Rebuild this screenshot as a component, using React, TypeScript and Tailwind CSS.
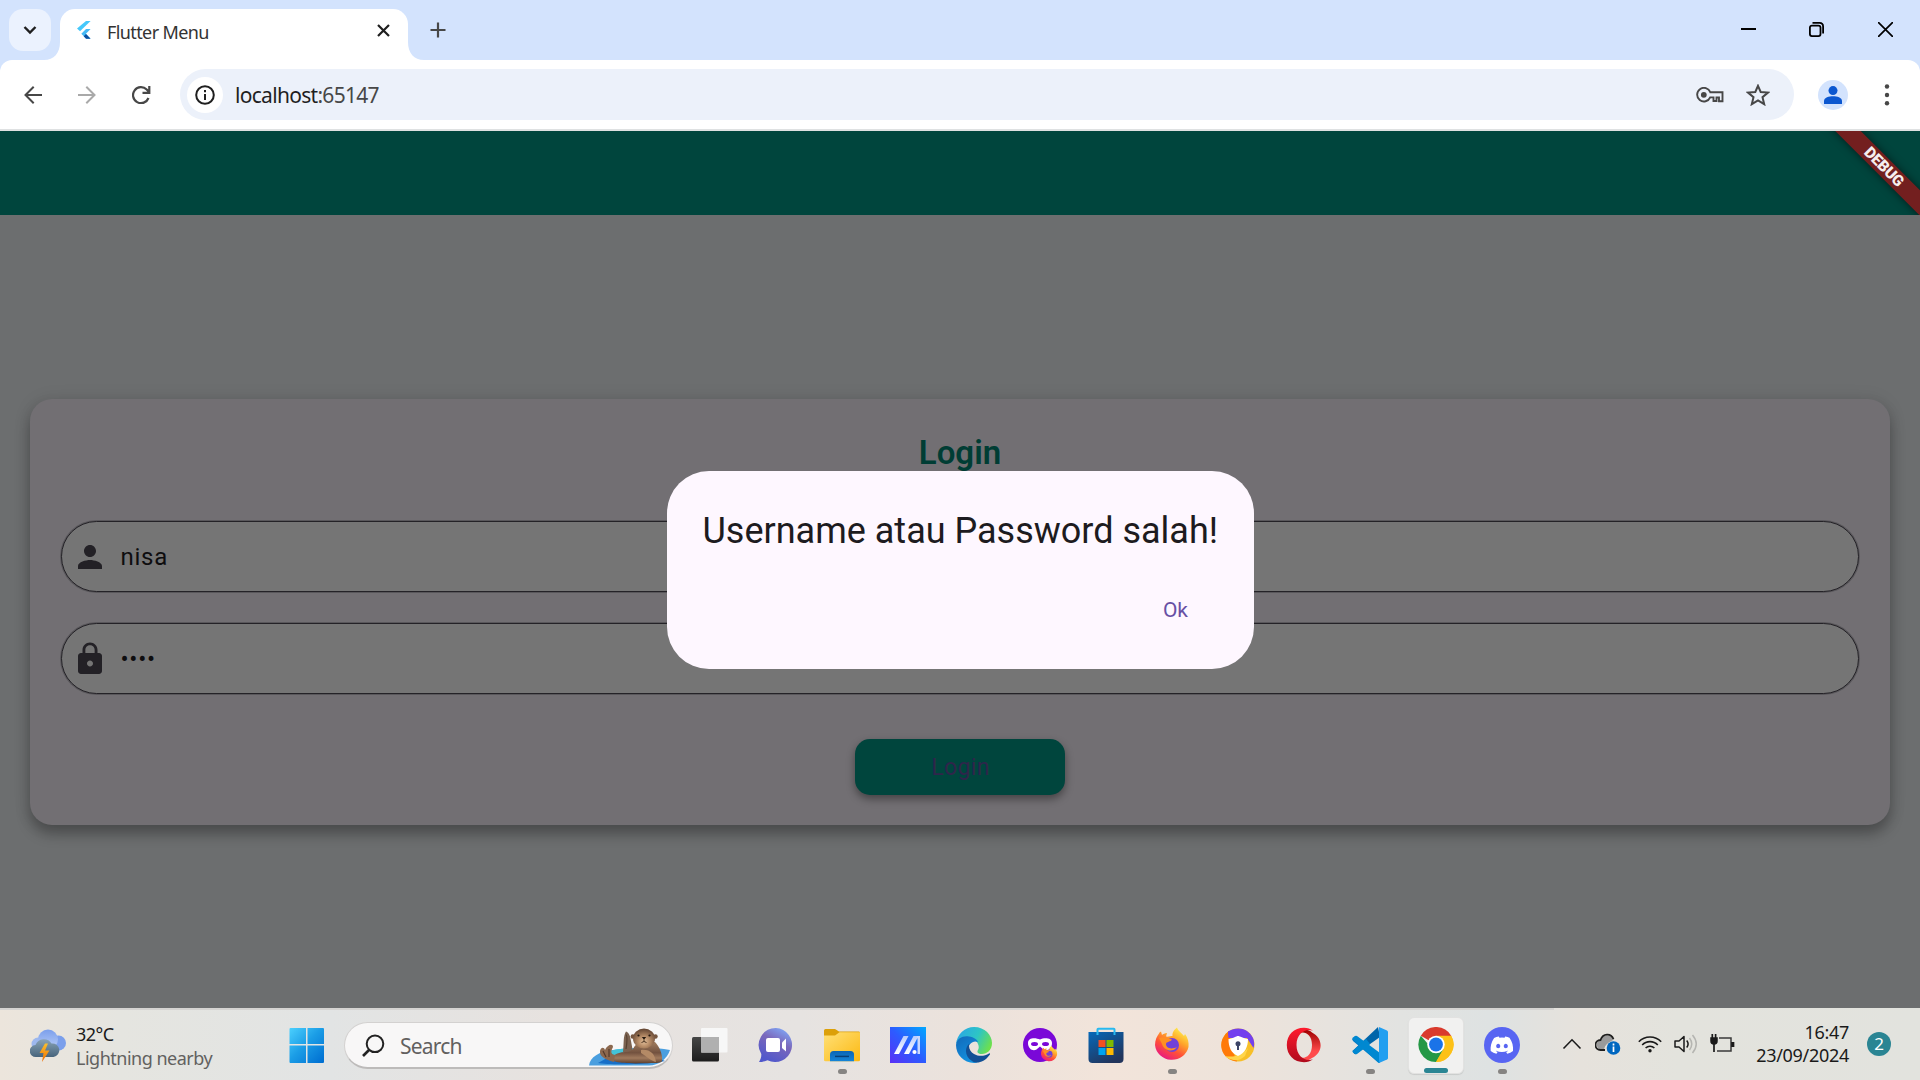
import React from "react";

const ui = "font-['Noto_Sans','Open_Sans',sans-serif]";

function FlutterLogo() {
  return (
    <svg className="h-[18px] w-[14px] shrink-0" viewBox="0 0 14 18">
      <path d="M9 0h4.600L3 10.300 0 7.500z" fill="#45c8fb" />
      <path d="M9 8h4.600L8.900 12.800 13.600 17.700H9.300L4.300 12.800z" fill="#45b9f5" />
      <path d="M9 17.700 6.700 15.200 9 13l4.600 4.700z" fill="#0a4fa0" />
    </svg>
  );
}

function TabStrip() {
  return (
    <div className="flex h-[60px] bg-[#d3e3fd] pl-[9px]">
      <div className="mt-[9px] flex h-[42px] w-[42px] items-center justify-center rounded-[14px] bg-[#ebf2fe]">
        <svg className="h-[10px] w-[14px]" viewBox="0 0 14 10" fill="none" stroke="#1f1f1f" strokeWidth="2.400">
          <path d="M1.500 2 7 7.500 12.500 2" />
        </svg>
      </div>
      <svg className="mt-[42px] ml-[-9px] h-[18px] w-[18px]" viewBox="0 0 18 18">
        <path d="M18 0v18H2C12 18 18 11 18 0z" fill="#fff" />
      </svg>
      <div className="mt-[9px] flex h-[51px] w-[348px] items-start rounded-t-[15px] bg-white pl-[17px]">
        <div className="mt-[12px] flex">
          <FlutterLogo />
        </div>
        <span className="mt-[11px] ml-[16px] w-[258px] text-[18px] leading-[24px] tracking-[-0.6px] whitespace-nowrap text-[#333]">Flutter Menu</span>
        <svg className="mt-[15px] ml-[12px] h-[13px] w-[13px]" viewBox="0 0 13 13" stroke="#1f1f1f" strokeWidth="2.200">
          <path d="M1 1 12 12M12 1 1 12" />
        </svg>
      </div>
      <svg className="mt-[42px] h-[18px] w-[18px]" viewBox="0 0 18 18">
        <path d="M0 0v18h16C6 18 0 11 0 0z" fill="#fff" />
      </svg>
      <svg className="mt-[22px] ml-[4px] h-[16px] w-[16px]" viewBox="0 0 16 16" stroke="#474747" strokeWidth="2.200">
        <path d="M8 0.500V15.500M0.500 8H15.500" />
      </svg>
      <div className="ml-auto flex">
        <svg className="mt-[22px] mr-[53px] h-[15px] w-[15px]" viewBox="0 0 15 15">
          <path d="M0 6h15v2H0z" />
        </svg>
        <svg className="mt-[22px] mr-[54px] h-[15px] w-[15px]" viewBox="0 0 15 15" fill="none" stroke="#000" strokeWidth="1.800">
          <rect x="0.900" y="3.600" width="10.600" height="10.500" rx="2" />
          <path d="M3.500 0.900H10.500Q14.100 0.900 14.100 4.500V11.500" />
        </svg>
        <svg className="mt-[22px] mr-[27px] h-[15px] w-[15px]" viewBox="0 0 15 15" stroke="#000" strokeWidth="1.700">
          <path d="M0 0 15 15M15 0 0 15" />
        </svg>
      </div>
    </div>
  );
}

function Toolbar() {
  return (
    <div className="bg-[#d3e3fd]">
      <div className="flex h-[71px] items-center rounded-t-[12px] border-b-2 border-[#dfe1e2] bg-white pl-[24px]">
        <svg className="h-[18px] w-[18px]" viewBox="0 0 18 18" fill="none" stroke="#474747" strokeWidth="2">
          <path d="M18 9H1.800M9.700 .8 1.500 9 9.700 17.200" />
        </svg>
        <svg className="ml-[36px] h-[18px] w-[18px]" viewBox="0 0 18 18" fill="none" stroke="#a9a9a9" strokeWidth="2">
          <path d="M0 9H16.200M8.300 .8 16.500 9 8.300 17.200" />
        </svg>
        <svg className="ml-[36px] h-[18px] w-[19px]" viewBox="0 0 19 18" fill="none" stroke="#474747" strokeWidth="2.200">
          <path d="M16.500 12A8 8 0 1 1 14.700 3.500L17 6M17.300 0V6.800H10.500" />
        </svg>
        <div className="ml-[29px] flex h-[51px] w-[1614px] items-center rounded-full bg-[#ecf1fa] pl-[7px]">
          <div className="flex h-[36px] w-[36px] items-center justify-center rounded-full bg-white">
            <svg className="h-[20px] w-[20px]" viewBox="0 0 20 20" fill="none" stroke="#1f1f1f" strokeWidth="2">
              <circle cx="10" cy="10" r="8.800" />
              <path d="M10 9V15M10 5V7.200" />
            </svg>
          </div>
          <span className="ml-[12px] text-[21px] leading-[28px] tracking-[-0.7px] text-[#1f1f1f]">
            localhost<span className="text-[#474747]">:65147</span>
          </span>
          <svg className="ml-auto h-[16px] w-[28px]" viewBox="0 0 28 16" fill="none" stroke="#474747" strokeWidth="1.900">
            <path d="M14.300 5.200H26.500V14.300H23V10.500H20.500V14H17.500V10.400H14.200A6.800 6.800 0 1 1 14.300 5.200Z" />
            <circle cx="7.800" cy="7.800" r="2.900" fill="#474747" stroke="none" />
          </svg>
          <svg className="mr-[24px] ml-[22px] h-[22px] w-[24px]" viewBox="0 0 24 22" fill="none" stroke="#474747" strokeWidth="2">
            <path d="M12 1.800 14.700 8 22 8.600 16.500 13.200 18.200 20.200 12 16.500 5.800 20.200 7.500 13.200 2 8.600 9.300 8Z" />
          </svg>
        </div>
        <div className="ml-[24px] flex h-[30px] w-[30px] items-center justify-center rounded-full bg-[#d3e3fd]">
          <svg className="h-[18px] w-[18px]" viewBox="0 0 18 18" fill="#0b57d0">
            <circle cx="9" cy="4.600" r="4.500" />
            <path d="M0 18v-3.200C0 11.700 5 10.300 9 10.300s9 1.400 9 4.500V18z" />
          </svg>
        </div>
        <svg className="ml-[36px] h-[22px] w-[6px]" viewBox="0 0 6 22" fill="#474747">
          <circle cx="3" cy="2.500" r="2.200" />
          <circle cx="3" cy="11" r="2.200" />
          <circle cx="3" cy="19.300" r="2.200" />
        </svg>
      </div>
    </div>
  );
}

function Field({ icon, children }: { icon: React.ReactNode; children: React.ReactNode }) {
  return (
    <div className="flex h-[71px] items-center rounded-full border border-[#242227] bg-[#757575] pl-[10px] shadow-[0_0_0_1px_#59575b]">
      {icon}
      {children}
    </div>
  );
}

function FlutterPage() {
  return (
    <div className="relative flex h-[877px] flex-col overflow-hidden bg-[#6c6e6f] font-[Roboto,sans-serif]">
      <div className="h-[84px] shrink-0 bg-[#00453d]" />
      <div className="flex flex-1 flex-col justify-center px-[30px]">
        <div className="flex h-[426px] flex-col rounded-[22px] bg-[#726f73] px-[31px] pt-[32px] shadow-[0_9px_14px_rgba(0,0,0,0.28),0_1px_18px_rgba(0,0,0,0.1)]">
          <div className="text-center text-[33px] leading-[44px] font-semibold text-[#003d34]">Login</div>
          <div className="mt-[46.5px]">
            <Field
              icon={
                <svg className="h-[36px] w-[36px]" viewBox="0 0 24 24" fill="#232126">
                  <path d="M12 12c2.210 0 4-1.790 4-4s-1.790-4-4-4-4 1.790-4 4 1.790 4 4 4zm0 2c-2.670 0-8 1.340-8 4v2h16v-2c0-2.660-5.330-4-8-4z" />
                </svg>
              }
            >
              <span className="ml-[12.5px] text-[24px] leading-[36px] tracking-[0.75px] text-[#0e0d0f]">nisa</span>
            </Field>
          </div>
          <div className="mt-[31px]">
            <Field
              icon={
                <svg className="h-[36px] w-[36px]" viewBox="0 0 24 24" fill="#232126">
                  <path d="M18 8h-1V6c0-2.760-2.240-5-5-5S7 3.240 7 6v2H6c-1.100 0-2 .9-2 2v10c0 1.100.9 2 2 2h12c1.100 0 2-.9 2-2V10c0-1.100-.9-2-2-2zm-6 9c-1.100 0-2-.9-2-2s.9-2 2-2 2 .9 2 2-.9 2-2 2zm3.100-9H8.900V6c0-1.710 1.390-3.100 3.100-3.100 1.710 0 3.100 1.390 3.100 3.100v2z" />
                </svg>
              }
            >
              <span className="ml-[12.5px] text-[24px] leading-[36px] tracking-[0.75px] text-[#0e0d0f]">••••</span>
            </Field>
          </div>
          <div className="mt-[45px] flex h-[56px] w-[210px] items-center justify-center self-center rounded-[15px] bg-[#00453d] pt-[3px] pl-[1px] text-[23px] tracking-[0.4px] text-[#2f254b] shadow-[0_4px_8px_rgba(0,0,0,0.4)]">
            Login
          </div>
        </div>
      </div>

      <div className="absolute top-[340px] left-[666.5px] flex h-[198px] w-[587px] flex-col rounded-[42px] bg-[#fef7ff] px-[36px] pt-[36px]">
        <div className="text-[36px] leading-[48px] whitespace-nowrap text-[#1d1b20]">Username atau Password salah!</div>
        <div className="mt-[40px] mr-[29.5px] self-end text-[21px] leading-[30px] text-[#6750a4]">Ok</div>
      </div>

      <div className="absolute top-0 right-0 h-[84px] w-[120px] overflow-hidden">
        <div className="absolute top-[27px] left-[-16px] flex h-[18px] w-[200px] rotate-45 items-center justify-center bg-[#731f1f] text-[15.500px] leading-[18px] font-black tracking-[-0.2px] text-[#f6eeee] shadow-[0_0_9px_rgba(0,0,0,0.55)]">
          DEBUG
        </div>
      </div>
    </div>
  );
}

function WeatherIcon() {
  return (
    <svg className="h-[34px] w-[36px]" viewBox="0 0 36 34">
      <defs>
        <linearGradient id="wc" x1="0" y1="0" x2="0" y2="1">
          <stop offset="0" stopColor="#7b9fec" />
          <stop offset="1" stopColor="#b9cdf6" />
        </linearGradient>
        <linearGradient id="wd" x1="0" y1="0" x2="0" y2="1">
          <stop offset="0" stopColor="#88a2b5" />
          <stop offset="1" stopColor="#48657c" />
        </linearGradient>
        <linearGradient id="wb" x1="0" y1="0" x2="0" y2="1">
          <stop offset="0" stopColor="#fbc02d" />
          <stop offset="1" stopColor="#ef6c00" />
        </linearGradient>
      </defs>
      <circle cx="8" cy="15" r="6.500" fill="#9db8ee" />
      <circle cx="28.500" cy="14" r="7.500" fill="#7b9feb" />
      <circle cx="18" cy="10.500" r="10" fill="url(#wc)" />
      <path d="M6 28a6 6 0 0 1-.5-12A9 9 0 0 1 21.500 14.500 6.800 6.800 0 1 1 23.500 28z" fill="url(#wd)" />
      <path d="M15 14.500 9.500 24H13.500L12 33 19.500 21.500H15L18 14.500z" fill="url(#wb)" />
    </svg>
  );
}

function StartIcon() {
  return (
    <svg className="h-[36px] w-[36px]" viewBox="0 0 36 36">
      <defs>
        <linearGradient id="st" gradientUnits="userSpaceOnUse" x1="0" y1="0" x2="34" y2="34">
          <stop offset="0" stopColor="#4dd2ff" />
          <stop offset="0.500" stopColor="#1b9de6" />
          <stop offset="1" stopColor="#0070d2" />
        </linearGradient>
      </defs>
      <path d="M1.500 1H17V17H.5V2a1 1 0 0 1 1-1zM18.500 1H34a1 1 0 0 1 1 1V17H18.500zM.5 18.500H17V36H1.500a1 1 0 0 1-1-1zM18.500 18.500H35V35a1 1 0 0 1-1 1H18.500z" fill="url(#st)" />
    </svg>
  );
}

function Otter() {
  return (
    <svg className="h-[38px] w-[82px]" viewBox="0 0 82 38">
      <defs>
        <linearGradient id="ob" x1="0" y1="0" x2="0" y2="1">
          <stop offset="0" stopColor="#a07c5e" />
          <stop offset="0.500" stopColor="#73523f" />
          <stop offset="0.750" stopColor="#a07a5d" />
          <stop offset="1" stopColor="#5d402f" />
        </linearGradient>
        <radialGradient id="of" cx="0.500" cy="0.650" r="0.600">
          <stop offset="0" stopColor="#e2bf9a" />
          <stop offset="0.450" stopColor="#b68b66" />
          <stop offset="1" stopColor="#6a4b37" />
        </radialGradient>
      </defs>
      <path d="M0 37.500C1 29 10 23.500 24 22 43 19 66 19 81 22 78 31 70 37.500 60 37.500z" fill="#4b9fdf" />
      <path d="M22 23c4-2.200 16-2.500 24-2v7H20z" fill="#43c3d8" />
      <path d="M9 35C18 37 60 37 76 33L68 30H18z" fill="#176fc8" />
      <path d="M34 24C35 16 34 8 37 3.500 40 4 41.500 9 42 13L44 24z" fill="#7b6250" />
      <path d="M37 6.500C39 9 38 15 37 21" fill="none" stroke="#57402f" strokeWidth="1.200" />
      <path d="M44 21C47 15 50 14 56 14H66C70 18 74 26 73 33 72 35 68 35 62 35 50 35.500 32 36 25 33 22 28 27 24.500 36 24 40 24 42 23 44 21z" fill="url(#ob)" />
      <path d="M11 23C12 19 15 19 16 22 18 17 24 15 24 19 22 23 21 26 26 27L25 34C18 32 10 29 11 23z" fill="#8c684e" />
      <path d="M14 23 17 29M20 21 20 29" stroke="#543a2b" strokeWidth="1.200" />
      <circle cx="43.800" cy="8.500" r="2.200" fill="#755640" />
      <circle cx="66.500" cy="8.500" r="2.200" fill="#755640" />
      <ellipse cx="55" cy="10.500" rx="11" ry="10" fill="url(#of)" />
      <path d="M52 22C61 21 66 26 67 34 62 33 57 28 52 25z" fill="#b48a66" />
      <circle cx="49.500" cy="7.500" r="1.100" fill="#24180f" />
      <circle cx="60.500" cy="7.500" r="1.100" fill="#24180f" />
      <path d="M52.800 9H57.200L55 11.800z" fill="#24180f" />
      <path d="M55 11.500V13.500M52.500 14.500Q55 12.500 57.500 14.500" stroke="#47301f" fill="none" />
    </svg>
  );
}

const ic = "h-[36px] w-[36px]";

function TaskViewIcon() {
  return (
    <svg className={ic} viewBox="0 0 36 36">
      <defs>
        <linearGradient id="tv" x1="0" y1="0" x2="0" y2="1">
          <stop offset="0" stopColor="#464646" />
          <stop offset="1" stopColor="#1d1d1d" />
        </linearGradient>
      </defs>
      <rect x="0" y="10" width="27" height="24.500" rx="1.500" fill="url(#tv)" />
      <rect x="9" y="1" width="26.500" height="24.500" rx="1" fill="#f7f7f7" />
      <path d="M9 10H27V25.500H9z" fill="#b0b0b0" />
    </svg>
  );
}

function ChatIcon() {
  return (
    <svg className={ic} viewBox="0 0 36 36">
      <defs>
        <linearGradient id="ct" x1="0.850" y1="0.100" x2="0.400" y2="1">
          <stop offset="0" stopColor="#7fa0f0" />
          <stop offset="0.400" stopColor="#7b68bb" />
          <stop offset="1" stopColor="#5158cb" />
        </linearGradient>
      </defs>
      <path d="M18 1A17 17 0 1 1 9.500 33.200C7 34.500 4 35 1 35 2.500 32.500 3.500 30 3.300 27A17 17 0 0 1 18 1z" fill="url(#ct)" />
      <rect x="8" y="11" width="14" height="14" rx="2" fill="#fff" />
      <path d="M24 15.500 28 11.500V24.500L24 21z" fill="#fff" />
    </svg>
  );
}

function FolderIcon() {
  return (
    <svg className={ic} viewBox="0 0 36 36">
      <defs>
        <linearGradient id="fo" x1="0" y1="0" x2="1" y2="1">
          <stop offset="0" stopColor="#ffe077" />
          <stop offset="1" stopColor="#fcb912" />
        </linearGradient>
        <linearGradient id="fb" x1="0" y1="0" x2="0" y2="1">
          <stop offset="0" stopColor="#0b65b5" />
          <stop offset="1" stopColor="#1585d8" />
        </linearGradient>
      </defs>
      <path d="M0 3.500Q0 2 1.500 2H11L15 4.500H35Q36 4.500 36 6V14H0z" fill="#dca009" />
      <path d="M0 8.500H11L15.500 5.200H36V33Q36 34.300 34.500 34.300H1.500Q0 34.300 0 33z" fill="url(#fo)" />
      <path d="M6 34.300V27.500Q6 24 9.500 24H26.500Q30 24 30 27.500V34.300z" fill="url(#fb)" />
      <path d="M11 29.400H25" stroke="#083f77" strokeWidth="1.500" />
    </svg>
  );
}

function AsusIcon() {
  return (
    <svg className={ic} viewBox="0 0 36 36">
      <defs>
        <linearGradient id="as" x1="0" y1="1" x2="1" y2="0">
          <stop offset="0" stopColor="#5a30f5" />
          <stop offset="0.500" stopColor="#2c5cff" />
          <stop offset="1" stopColor="#00a8ff" />
        </linearGradient>
        <linearGradient id="aw" x1="0" y1="1" x2="0" y2="0">
          <stop offset="0" stopColor="#fff" />
          <stop offset="1" stopColor="#b9ccff" />
        </linearGradient>
      </defs>
      <path d="M0 0H36V36H0z" fill="url(#as)" />
      <path d="M4 27 13.500 9H18.500L9 27z" fill="url(#aw)" />
      <path d="M14 27 23.500 9H28.500L19 27z" fill="url(#aw)" />
      <path d="M26.500 9H30V27H27.500V12z" fill="#c9d8ff" />
      <circle cx="24.500" cy="25" r="2.100" fill="#fff" />
    </svg>
  );
}

function EdgeIcon() {
  return (
    <svg className={ic} viewBox="0 0 36 36">
      <defs>
        <linearGradient id="eg" x1="0" y1="0.200" x2="1" y2="0.600">
          <stop offset="0" stopColor="#2aa6e6" />
          <stop offset="0.550" stopColor="#2dc5c5" />
          <stop offset="1" stopColor="#6ee04c" />
        </linearGradient>
        <linearGradient id="eb" x1="0" y1="0" x2="0.600" y2="1">
          <stop offset="0" stopColor="#1269b9" />
          <stop offset="1" stopColor="#1292e0" />
        </linearGradient>
      </defs>
      <path d="M0 17C1 7 9 0 18 0 29 0 36 8 36 16 36 23 31 27 26 27 22 27 20.500 25 22 23 24 20 22 14 17 12 11 9 4 11 0 17z" fill="url(#eg)" />
      <path d="M0 18C1 11 7 8.500 13 9.500 18 10 21.500 13 22 15 17 13 12 17 12 23 12 29 16 34 22 35.500 10 38 0 29 0 18z" fill="url(#eb)" />
      <path d="M13.500 16.500C12 20 14 25 18 27 23 30 29 29 33 26.500 34 26 34.500 27 33.500 28 28 36 20 37 16 34 9 30 8 21 13.500 16.500z" fill="#114f95" />
    </svg>
  );
}

function FirefoxShape({ id }: { id: string }) {
  return (
    <>
      <defs>
        <linearGradient id={id} x1="0.850" y1="0.050" x2="0.250" y2="1">
          <stop offset="0" stopColor="#fff44f" />
          <stop offset="0.350" stopColor="#ffa52a" />
          <stop offset="0.650" stopColor="#ff5038" />
          <stop offset="1" stopColor="#e6138a" />
        </linearGradient>
      </defs>
      <path d="M1 18C1 13 3 9 5 6.500 5.500 5.500 6 5 7 4.500L8 8C9 7 11 6 13 6L12 9.500C14 10 17 9 18.500 9 18 5 21 2 23 0.500 24 4 28 6 30 9L31 7C34 11 35 15 34.500 20A17 16.500 0 0 1 1 18z" fill={`url(#${id})`} />
      <circle cx="18" cy="18" r="7" fill="#7041d8" />
      <path d="M5 11C9 9 13 11 18 12.500 17 15 12 14.500 12 17 12 21 17 23 23 20 19 26 10 24 8 17z" fill="#ff8f22" />
    </>
  );
}

function PrivateIcon() {
  return (
    <svg className={ic} viewBox="0 0 36 36">
      <circle cx="18" cy="18" r="17" fill="#7a08d8" />
      <path d="M6 16C6 10 14 10.500 18 12.500 22 10.500 30 10.500 30 16 30 22 25 24.500 21.500 22.500L18 19.500 14.500 22.500C11 24.500 6 22 6 16z" fill="#fff" />
      <ellipse cx="12.500" cy="17" rx="3.500" ry="2.100" fill="#7a08d8" />
      <ellipse cx="23.500" cy="17" rx="3.500" ry="2.100" fill="#7a08d8" />
      <g transform="translate(18.500 18.500) scale(.48)">
        <FirefoxShape id="fxs" />
      </g>
    </svg>
  );
}

function StoreIcon() {
  return (
    <svg className={ic} viewBox="0 0 36 36">
      <defs>
        <linearGradient id="ms" x1="0" y1="0" x2="0.600" y2="1">
          <stop offset="0" stopColor="#0669ba" />
          <stop offset="1" stopColor="#22355c" />
        </linearGradient>
      </defs>
      <path d="M.5 5H35.500V32Q35.500 36 31.500 36H4.500Q.5 36 .5 32z" fill="url(#ms)" />
      <path d="M9.500 8V2.500Q9.500 1.800 10.200 1.800H25.800Q26.500 1.800 26.500 2.500V8" fill="none" stroke="#28b9f0" strokeWidth="2" />
      <path d="M10.500 13h7v7h-7z" fill="#f25022" />
      <path d="M18.500 13h7v7h-7z" fill="#7fba00" />
      <path d="M10.500 21h7v7h-7z" fill="#00a4ef" />
      <path d="M18.500 21h7v7h-7z" fill="#ffb900" />
    </svg>
  );
}

function FirefoxIcon() {
  return (
    <svg className={ic} viewBox="0 0 36 36">
      <FirefoxShape id="fxl" />
    </svg>
  );
}

function SecureIcon() {
  return (
    <svg className={ic} viewBox="0 0 36 36">
      <circle cx="18" cy="18" r="16.500" fill="#f7bf28" />
      <path d="M17 34.500A16.500 16.500 0 0 1 9 4L11 20z" fill="#ff7a08" />
      <path d="M8 4.500C17-1 28 1 33 11 34.500 15 34.500 18 33.500 21L27 11 8.500 11C8 8 8 6 8 4.500z" fill="#7340ee" />
      <path d="M5 29C14 31 22 28 28 21L25 29C19 35 10 34 5 29z" fill="#ffd54a" />
      <path d="M8.500 12C14 11.500 16 9 18 9S23 11.500 28 12C28 20 25 26 18 29 11 26 8.500 20 8.500 12z" fill="#fff" />
      <circle cx="18" cy="16.800" r="2.500" fill="#3d4566" />
      <path d="M17 17H19V23H17z" fill="#3d4566" />
    </svg>
  );
}

function OperaIcon() {
  return (
    <svg className={ic} viewBox="0 0 36 36">
      <defs>
        <linearGradient id="op" x1="0" y1="0" x2="0" y2="1">
          <stop offset="0" stopColor="#ff1b2d" />
          <stop offset="1" stopColor="#b00b1d" />
        </linearGradient>
        <linearGradient id="oq" x1="0" y1="0" x2="0" y2="1">
          <stop offset="0" stopColor="#9c0000" />
          <stop offset="0.700" stopColor="#ff4b4b" />
        </linearGradient>
      </defs>
      <path d="M12 7C16 1.500 22 1.500 26 5.500 37 11 38 25 26 31 21 35 16 34 12 29.500 17 33 26 30 26 18S17 3.500 12 7z" fill="url(#oq)" />
      <path d="M18 .8C8 .8 .8 8 .8 18S8 35.200 18 35.200C21.500 35.200 24.500 34 27 32.200 20 35 10.500 30 10.500 18S20 1 27 3.800C24.500 2 21.500 .8 18 .8z" fill="url(#op)" />
    </svg>
  );
}

function CodeIcon() {
  return (
    <svg className={ic} viewBox="0 0 36 36">
      <path d="M0 12 3.500 9 27 26.500V36L1 14z" fill="#0079c4" />
      <path d="M.5 24 26 0 28 10 4 27Q3 27.500 2 26.500z" fill="#0065a9" />
      <path d="M1 12.500Q0 11.500 1 10.500L3 9Q4 8.500 5 9L28 26V36L26 35.500z" fill="#0088d1" />
      <path d="M27 0 35 3.500Q36 4 36 5V31Q36 32 35 32.500L27 36z" fill="#229ff0" />
      <path d="M1 23.500 14 11.700 18 17 5 27Q4 27.500 3 27L1 25.500Q0 24.500 1 23.500z" fill="#0088d1" />
    </svg>
  );
}

function ChromeIcon() {
  return (
    <svg className={ic} viewBox="0 0 36 36">
      <path d="M18 18 2.400 9A18 18 0 0 1 33.600 9z" fill="#d93a2d" />
      <path d="M18 18 33.600 9A18 18 0 0 1 18 36L18 26z" fill="#fdc117" />
      <path d="M18 18H10.200L2.400 9A18 18 0 0 0 18 36L25.800 22.500z" fill="#249846" />
      <path d="M18 9H33.600A18 18 0 0 1 18 36L25.800 22.500z" fill="#fdc117" />
      <circle cx="18" cy="18" r="9" fill="#fff" />
      <circle cx="18" cy="18" r="7.100" fill="#1a73e8" />
    </svg>
  );
}

function DiscordIcon() {
  return (
    <svg className={ic} viewBox="0 0 36 36">
      <circle cx="18" cy="18" r="18" fill="#5865f2" />
      <g transform="translate(6.600 6.800) scale(.95)">
        <path fill="#fff" d="M20.317 4.370a19.800 19.800 0 0 0-4.885-1.515.074.074 0 0 0-.079.037c-.21.375-.444.864-.608 1.250a18.270 18.270 0 0 0-5.487 0 12.640 12.640 0 0 0-.617-1.250.077.077 0 0 0-.079-.037A19.740 19.740 0 0 0 3.677 4.370C.533 9.046-.32 13.580.099 18.058a19.900 19.900 0 0 0 5.993 3.030 14 14 0 0 0 1.226-1.994 13.100 13.100 0 0 1-1.872-.892l.372-.292c3.928 1.793 8.180 1.793 12.062 0l.373.292a12.300 12.300 0 0 1-1.873.892 16 16 0 0 0 1.225 1.993 19.800 19.800 0 0 0 6.002-3.030c.5-5.177-.838-9.674-3.549-13.687zM8.020 15.330c-1.183 0-2.157-1.085-2.157-2.419s.956-2.419 2.157-2.419c1.210 0 2.176 1.096 2.157 2.420 0 1.333-.956 2.418-2.157 2.418zm7.975 0c-1.183 0-2.157-1.085-2.157-2.419s.955-2.419 2.157-2.419c1.210 0 2.176 1.096 2.157 2.420 0 1.333-.946 2.418-2.157 2.418z" />
      </g>
    </svg>
  );
}

const apps: { icon: React.ReactNode; state?: "running" | "active" }[] = [
  { icon: <TaskViewIcon /> },
  { icon: <ChatIcon /> },
  { icon: <FolderIcon />, state: "running" },
  { icon: <AsusIcon /> },
  { icon: <EdgeIcon /> },
  { icon: <PrivateIcon /> },
  { icon: <StoreIcon /> },
  { icon: <FirefoxIcon />, state: "running" },
  { icon: <SecureIcon /> },
  { icon: <OperaIcon /> },
  { icon: <CodeIcon />, state: "running" },
  { icon: <ChromeIcon />, state: "active" },
  { icon: <DiscordIcon />, state: "running" },
];

function TaskApp({ icon, state }: { icon: React.ReactNode; state?: "running" | "active" }) {
  return (
    <div className="flex w-[66px] justify-center pt-[9px]">
      <div className={state === "active" ? "flex h-[57px] w-[56px] flex-col items-center rounded-[6px] border border-[#e2e2e1] bg-[#f1f1f0] pt-[9px] shadow-[0_1px_1px_rgba(0,0,0,0.1)]" : "flex h-[57px] w-[56px] flex-col items-center pt-[10px]"}>
        {icon}
        {state === "active" && <div className="mt-[6px] h-[5px] w-[24px] shrink-0 rounded-full bg-[#2a8593]" />}
        {state === "running" && <div className="mt-[6px] h-[5px] w-[9px] shrink-0 rounded-full bg-[#868482]" />}
      </div>
    </div>
  );
}

function Tray() {
  return (
    <div className="flex items-center pb-[1px]">
      <svg className="h-[12px] w-[20px]" viewBox="0 0 20 12" fill="none" stroke="#1a1a1a" strokeWidth="1.600">
        <path d="M1.500 10.500 10 1.800 18.500 10.500" />
      </svg>
      <svg className="ml-[13px] h-[22px] w-[26px]" viewBox="0 0 26 22">
        <path d="M6 17A5.300 5.300 0 0 1 5 7 8 8 0 0 1 19 6.500L13 10Q9 13 9 18z" fill="#9a9a9a" />
        <path d="M10 17H5.500A5 5 0 0 1 5.500 7C8 0 16 0 18.500 6" fill="none" stroke="#1d1d1d" strokeWidth="1.800" />
        <circle cx="18.500" cy="15" r="6.800" fill="#0067c0" />
        <path d="M18.500 13.500V19M18.500 10.500V12.500" stroke="#fff" strokeWidth="1.700" />
      </svg>
      <svg className="ml-[17px] h-[18px] w-[24px]" viewBox="0 0 24 18" fill="none" stroke="#1a1a1a" strokeWidth="1.600">
        <path d="M.8 6.800A15.600 15.600 0 0 1 23.200 6.800M4.200 10A10.800 10.800 0 0 1 19.800 10M7.600 13A6.300 6.300 0 0 1 16.400 13" />
        <circle cx="12" cy="15.800" r="1.700" fill="#1a1a1a" stroke="none" />
      </svg>
      <svg className="ml-[12px] h-[20px] w-[25px]" viewBox="0 0 25 20" fill="none" stroke="#1a1a1a" strokeWidth="1.500">
        <path d="M1 7V13H5L10 17.500V2.500L5 7ZM12.700 6.500Q15.500 10 12.700 13.500" strokeLinejoin="round" />
        <path d="M15.500 4Q20 10 15.500 16M18.500 1Q26 10 18.500 19" stroke="#b5b5b1" />
      </svg>
      <svg className="ml-[11px] h-[20px] w-[25px]" viewBox="0 0 25 20" fill="none" stroke="#1a1a1a" strokeWidth="1.500">
        <path d="M9 4H21V17H7" stroke="#3a3a3a" />
        <path d="M1 4H7V7A3 3 0 0 1 1 7Z" fill="#1a1a1a" />
        <path d="M2.300 0V4M5.600 0V4M4 9V18M22 8V13M23.500 8V13" strokeWidth="1.700" />
      </svg>
    </div>
  );
}

function Taskbar() {
  return (
    <div className="flex h-[72px] bg-[linear-gradient(90deg,#ece5dc_0px,#e5e5e0_120px,#e2e4e4_330px,#e7e2df_560px,#e6e3e1_800px,#ebe2dc_960px,#f2e4da_1110px,#eee3da_1230px,#e2e3e1_1400px,#dee2e2_1490px,#e6e2dc_1580px,#e3e3dd_1680px,#e2e3de_1920px)]">
      <div className="flex w-[1554px] shrink-0 border-t-2 border-[#d5d4d2]">
        <div className="flex w-[260px] pl-[30px]">
          <div className="mt-[19px]">
            <WeatherIcon />
          </div>
          <div className="mt-[12px] ml-[10px] text-[18px] leading-[24px] tracking-[-0.5px] whitespace-nowrap">
            <div className="text-[#1a1a1a]">32°C</div>
            <div className="text-[#62615f]">Lightning nearby</div>
          </div>
        </div>
        <div className="mt-[17px] ml-[29px] shrink-0">
          <StartIcon />
        </div>
        <div className="mt-[12px] ml-[19px] flex h-[47px] w-[329px] shrink-0 items-center rounded-full border-[1.5px] border-b-2 border-[#d3d1d0] border-b-[#bdbbba] bg-[#f8f7f7]">
          <svg className="ml-[17px] h-[23px] w-[23px]" viewBox="0 0 23 23" fill="none" stroke="#222" strokeWidth="2">
            <circle cx="13" cy="9.800" r="8.300" />
            <path d="M7.500 15.500 1 22" strokeWidth="2.600" />
          </svg>
          <span className="mt-[1px] ml-[15px] text-[21px] leading-[28px] tracking-[-0.8px] text-[#62605f]">Search</span>
          <div className="mt-[4px] mr-[1px] ml-auto">
            <Otter />
          </div>
        </div>
        <div className="ml-[4px] flex mt-[-2px]">
          {apps.map((a, i) => (
            <TaskApp key={i} icon={a.icon} state={a.state} />
          ))}
        </div>
      </div>
      <div className="ml-[8px] flex flex-1">
        <Tray />
        <div className="ml-auto mt-[13px] text-right text-[18px] leading-[23px] tracking-[-0.3px] text-[#1a1a1a]">
          <div>16:47</div>
          <div>23/09/2024</div>
        </div>
        <div className="mt-[24px] mr-[29px] ml-[18px] flex h-[24px] w-[24px] items-center justify-center rounded-full bg-[#2a8593] text-[17px] text-white">2</div>
      </div>
    </div>
  );
}

export default function App() {
  return (
    <div className={`h-[1080px] w-[1920px] overflow-hidden ${ui}`}>
      <TabStrip />
      <Toolbar />
      <FlutterPage />
      <Taskbar />
    </div>
  );
}
